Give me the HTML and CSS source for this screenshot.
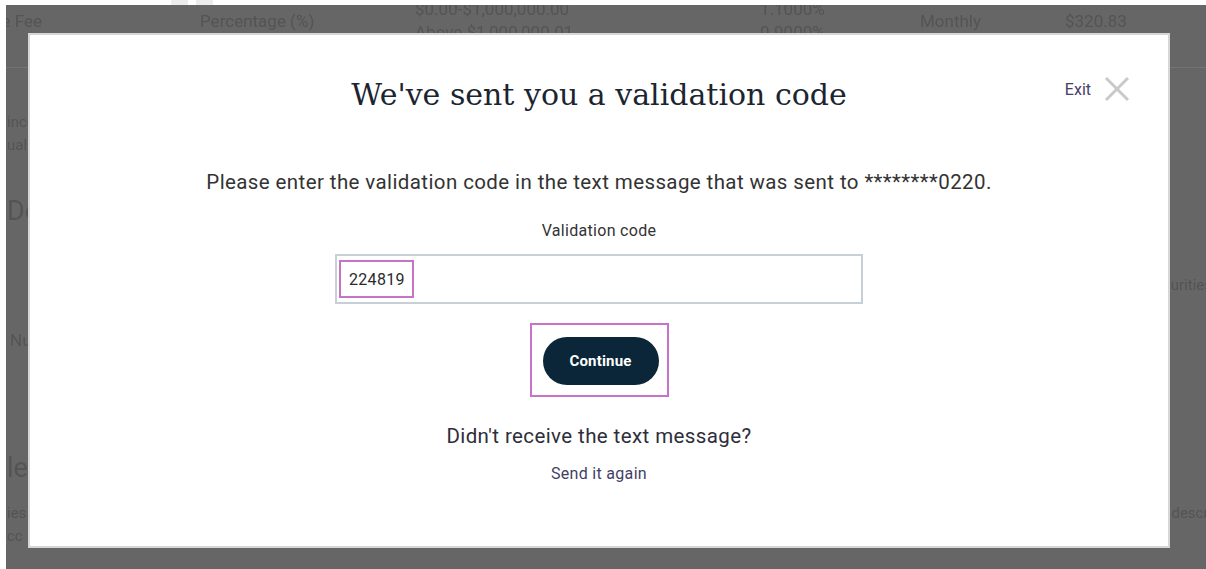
FILE: index.html
```html
<!DOCTYPE html>
<html lang="en">
<head>
<meta charset="utf-8">
<title>Validation code</title>
<link rel="stylesheet" href="styles.css">
</head>
<body>
<div class="topbar">
  <span class="tab-chip"></span>
  <span class="tab-chip"></span>
</div>
<div class="screen">
  <div class="page">
    <div class="fee-row">
      <div class="cell cell-name single">Service Fee</div>
      <div class="cell cell-type single">Percentage (%)</div>
      <div class="cell cell-range"><div>$0.00-$1,000,000.00</div><div>Above $1,000,000.01</div></div>
      <div class="cell cell-rate"><div>1.1000%</div><div>0.9000%</div></div>
      <div class="cell cell-freq single">Monthly</div>
      <div class="cell cell-amt single">$320.83</div>
    </div>
    <div class="page-body">
      <div class="line-pair blk-a">
        <div class="row"><span class="frag">income</span></div>
        <div class="row"><span class="frag">ualified</span></div>
      </div>
      <h2 class="heading blk-b">Details</h2>
      <div class="row blk-c"><span></span><span class="frag frag-right frag-sec">Securities</span></div>
      <div class="row blk-d"><span class="frag frag-mid">Number</span></div>
      <h2 class="heading blk-e">lee</h2>
      <div class="line-pair blk-f">
        <div class="row"><span class="frag">ies</span><span class="frag frag-right">description</span></div>
        <div class="row"><span class="frag">cc</span></div>
      </div>
    </div>
  </div>

  <div class="modal" role="dialog" aria-labelledby="modal-title">
    <button class="exit" type="button">
      <span class="exit-label">Exit</span>
      <svg class="exit-icon" width="26" height="26" viewBox="0 0 26 26" aria-hidden="true">
        <path d="M2 2 L24 24 M24 2 L2 24" stroke="#c9c9c9" stroke-width="3" fill="none"/>
      </svg>
    </button>
    <h1 id="modal-title" class="modal-title">We've sent you a validation code</h1>
    <p class="modal-text">Please enter the validation code in the text message that was sent to ********0220.</p>
    <label class="field-label" for="code">Validation code</label>
    <div class="field" id="code">
      <span class="field-value">224819</span>
    </div>
    <div class="btn-frame">
      <button class="btn-continue" type="button">Continue</button>
    </div>
    <p class="resend-q">Didn't receive the text message?</p>
    <a class="resend-link" href="#">Send it again</a>
  </div>
</div>
</body>
</html>
```

FILE: styles.css
```css
html, body {
  margin: 0;
  padding: 0;
  background: #ffffff;
}

body {
  width: 1206px;
  height: 569px;
  overflow: hidden;
  font-family: Roboto, "Liberation Sans", sans-serif;
}

/* thin white strip above the dimmed page */
.topbar {
  height: 5px;
  display: flex;
  gap: 8px;
  padding-left: 171px;
}

.tab-chip {
  width: 17px;
  height: 5px;
  background: #ececec;
}

.screen {
  position: relative;
  margin-left: 6px;
  width: 1200px;
  height: 564px;
  background: #666666;
  overflow: hidden;
}

/* page content dimmed under the overlay */
.page {
  color: #545454;
  filter: blur(0.6px);
  font-size: 17px;
}

.fee-row {
  display: flex;
  margin-top: -7px;
  height: 70px;
  box-sizing: border-box;
  border-bottom: 1px solid #737373;
  line-height: 23px;
}

.cell { flex: none; }
.cell.single { padding-top: 12px; }
.cell-name {
  width: 120px;
  margin-left: -84px;
  display: flex;
  justify-content: flex-end;
  white-space: nowrap;
}
.cell-type { margin-left: 158px; width: 215px; }
.cell-range { width: 345px; }
.cell-rate { width: 160px; }
.cell-freq { width: 145px; }
.cell-amt { width: 100px; }

.page-body {
  display: flex;
  flex-direction: column;
  font-size: 15px;
  line-height: 23px;
}

.row {
  display: flex;
  justify-content: space-between;
  white-space: nowrap;
}

.frag { margin-left: 1px; }
.frag-right { margin-right: -40px; }
.frag-sec { margin-right: -6px; }
.frag-mid { margin-left: 4px; font-size: 17px; }

.heading {
  margin: 0;
  font-weight: normal;
  font-size: 27px;
  line-height: 32px;
  margin-left: 1px;
}

.blk-a { margin-top: 43px; }
.blk-b { margin-top: 38px; }
.blk-c { margin-top: 47px; }
.blk-d { margin-top: 32px; }
.blk-e { margin-top: 100px; }
.blk-f { margin-top: 18px; }

/* dialog */
.modal {
  position: absolute;
  left: 22px;
  top: 28px;
  width: 1142px;
  height: 515px;
  box-sizing: border-box;
  background: #ffffff;
  border: 2px solid #d6d6d6;
  display: flex;
  flex-direction: column;
  align-items: center;
  padding-top: 42px;
  color: #333333;
}

.exit {
  position: absolute;
  top: 41px;
  right: 38px;
  display: flex;
  align-items: center;
  gap: 13px;
  padding: 0;
  border: 0;
  background: none;
  font-family: Roboto, sans-serif;
}

.exit-label {
  font-size: 16px;
  color: #463e6b;
}

.exit-icon { display: block; }

.modal-title {
  margin: 0;
  font-family: "DejaVu Serif", serif;
  font-weight: normal;
  font-size: 30px;
  line-height: 36px;
  color: #1b2530;
}

.modal-text {
  margin: 57px 0 0;
  font-size: 20.5px;
  letter-spacing: 0.4px;
  line-height: 24px;
  color: #333333;
}

.field-label {
  margin-top: 27px;
  font-size: 16px;
  letter-spacing: 0.3px;
  line-height: 20px;
  color: #333333;
}

.field {
  margin-top: 13px;
  width: 528px;
  height: 50px;
  box-sizing: border-box;
  border: 2px solid #c7d0d6;
  display: flex;
  align-items: center;
  padding-left: 2px;
}

.field-value {
  box-sizing: border-box;
  height: 38px;
  padding: 0 7px 0 8px;
  display: flex;
  align-items: center;
  border: 2px solid #c673c8;
  font-size: 16px;
  letter-spacing: 0.3px;
  color: #2b2b2b;
}

.btn-frame {
  margin-top: 19px;
  box-sizing: border-box;
  width: 139px;
  height: 74px;
  border: 2px solid #c673c8;
  padding: 12px 8px 10px 11px;
}

.btn-continue {
  display: block;
  width: 116px;
  height: 48px;
  border: 0;
  border-radius: 24px;
  background: #0a2638;
  color: #ffffff;
  font-family: Roboto, sans-serif;
  font-weight: bold;
  font-size: 15px;
  letter-spacing: 0.2px;
  padding: 0;
}

.resend-q {
  margin: 27px 0 0;
  font-size: 20.5px;
  letter-spacing: 0.4px;
  line-height: 24px;
  color: #2e2e3a;
}

.resend-link {
  margin-top: 16px;
  font-size: 16px;
  letter-spacing: 0.3px;
  line-height: 20px;
  color: #3f3f63;
  text-decoration: none;
}
```
